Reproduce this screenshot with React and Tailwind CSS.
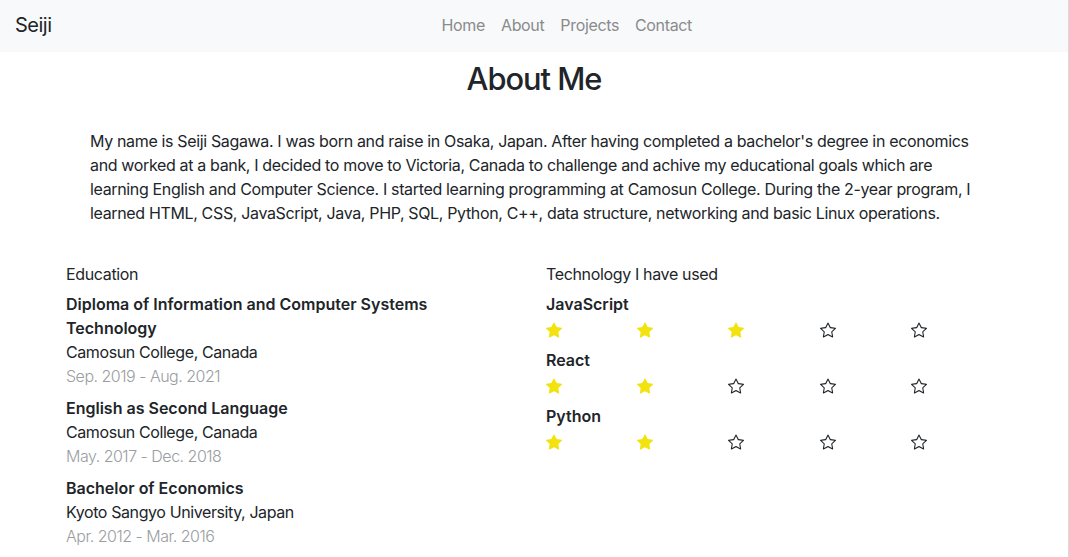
import React from "react";
import { BsStar, BsStarFill } from "react-icons/bs";

const education = [
  {
    title: "Diploma of Information and Computer Systems Technology",
    school: "Camosun College, Canada",
    date: "Sep. 2019 - Aug. 2021",
  },
  {
    title: "English as Second Language",
    school: "Camosun College, Canada",
    date: "May. 2017 - Dec. 2018",
  },
  {
    title: "Bachelor of Economics",
    school: "Kyoto Sangyo University, Japan",
    date: "Apr. 2012 - Mar. 2016",
  },
];

const tech = [
  { name: "JavaScript", level: 3 },
  { name: "React", level: 2 },
  { name: "Python", level: 2 },
];

function Stars({ level }) {
  return (
    <div className="grid grid-cols-5 pt-[6px] pb-[10px]">
      {[0, 1, 2, 3, 4].map((i) => (
        <div key={i} className="h-4 flex items-center">
          {i < level ? (
            <BsStarFill className="w-4 h-4 text-[#f2e30f]" />
          ) : (
            <BsStar className="w-4 h-4 text-[#212529]" />
          )}
        </div>
      ))}
    </div>
  );
}

export default function App() {
  return (
    <div
      className="w-full min-h-[557px] bg-white border-r border-[#d9d9d9] text-[#212529] text-base leading-6 tracking-[-0.35px]"
      style={{ fontFamily: "Inter, 'Noto Sans', sans-serif" }}
    >
      <nav className="h-[52px] bg-[#f8f9fa] flex items-center pl-[15px] pb-[2px]">
        <span className="text-[20px] leading-[30px] text-[#212529] tracking-[-0.5px]">Seiji</span>
        <ul className="flex ml-[382px]">
          {["Home", "About", "Projects", "Contact"].map((l) => (
            <li key={l} className="px-2 text-[#8a8b8c]">
              {l}
            </li>
          ))}
        </ul>
      </nav>

      <div className="w-[960px] mx-auto px-3">
        <h2 className="text-center text-[30.8px] leading-[1.2] font-medium mt-[9px] mb-[31px] tracking-[-1px]">
          About Me
        </h2>
        <p className="px-6">
          My name is Seiji Sagawa. I was born and raise in Osaka, Japan. After having completed a bachelor's degree in economics and worked at a bank, I decided to move to Victoria, Canada to challenge and achive my educational goals which are learning English and Computer Science. I started learning programming at Camosun College. During the 2-year program, I learned HTML, CSS, JavaScript, Java, PHP, SQL, Python, C++, data structure, networking and basic Linux operations.
        </p>

        <div className="grid grid-cols-2 gap-6 mt-[40px]">
          <div>
            <div className="leading-[1.2] mb-2">Education</div>
            {education.map((e) => (
              <div key={e.title} className="mb-2">
                <div className="font-semibold tracking-normal">{e.title}</div>
                <div className="tracking-[-0.4px]">{e.school}</div>
                <div className="font-light text-[#9a9da1] tracking-[-0.5px]">{e.date}</div>
              </div>
            ))}
          </div>
          <div>
            <div className="leading-[1.2] mb-2">Technology I have used</div>
            {tech.map((t) => (
              <div key={t.name}>
                <div className="font-semibold tracking-normal">{t.name}</div>
                <Stars level={t.level} />
              </div>
            ))}
          </div>
        </div>
      </div>
    </div>
  );
}
